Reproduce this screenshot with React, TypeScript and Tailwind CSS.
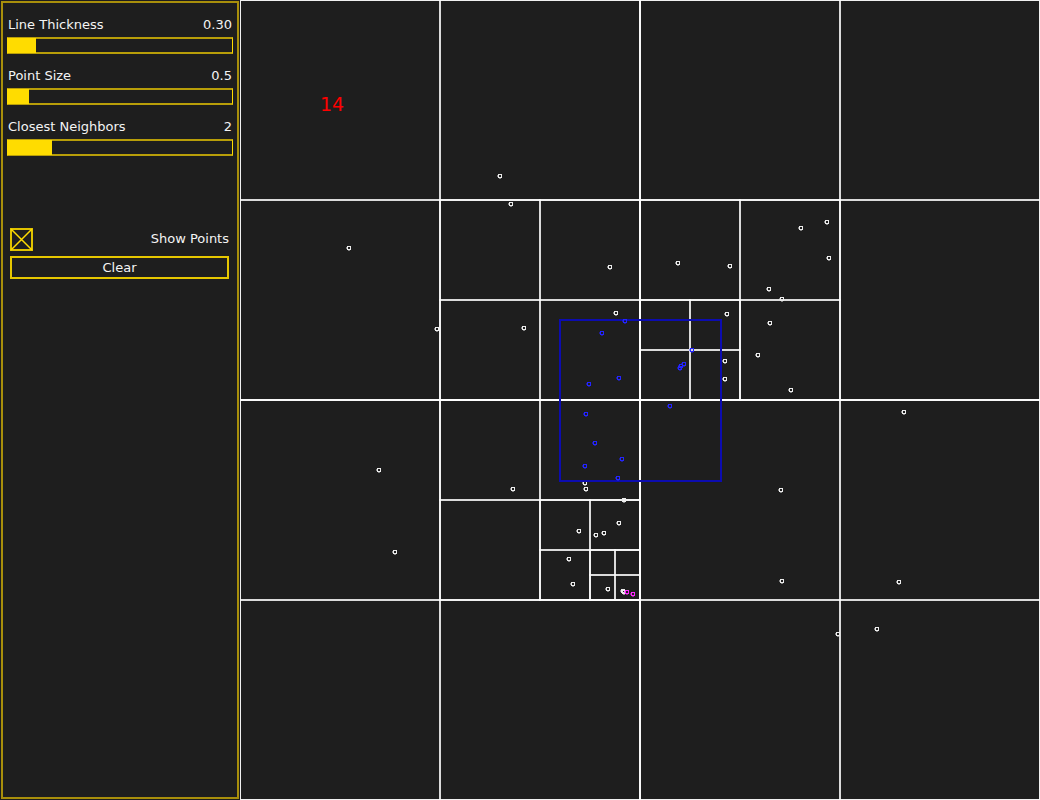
import React, { useState } from "react";

type Cell = { x: number; y: number; size: number };
type Point = [number, number];

const SPLITS = new Set([
  "0,0,800",
  "0,0,400",
  "400,0,400",
  "0,400,400",
  "400,400,400",
  "200,200,200",
  "400,200,200",
  "200,400,200",
  "400,300,100",
  "300,500,100",
  "350,550,50",
]);

function collectCells(x: number, y: number, size: number): Cell[] {
  const own = { x, y, size };
  if (!SPLITS.has(`${x},${y},${size}`)) return [own];
  const half = size / 2;
  return [
    own,
    ...collectCells(x, y, half),
    ...collectCells(x + half, y, half),
    ...collectCells(x, y + half, half),
    ...collectCells(x + half, y + half, half),
  ];
}

const CELLS = collectCells(0, 0, 800);

const POINTS: Point[] = [
  [260, 176], [271, 204], [109, 248], [370, 267], [438, 263], [490, 266],
  [561, 228], [587, 222], [589, 258], [529, 289], [542, 299], [197, 329],
  [284, 328], [376, 313], [487, 314], [530, 323], [518, 355], [485, 361],
  [485, 379], [551, 390], [664, 412], [139, 470], [273, 489], [345, 483],
  [346, 489], [384, 500], [541, 490], [155, 552], [339, 531], [356, 535],
  [364, 533], [379, 523], [329, 559], [333, 584], [368, 589], [383, 591],
  [384, 592], [542, 581], [659, 582], [598, 634], [637, 629],
];

const IN_RANGE: Point[] = [
  [385, 321], [362, 333], [452, 350], [440, 368], [441, 366], [444, 364],
  [379, 378], [349, 384], [430, 406], [346, 414], [355, 443], [382, 459],
  [345, 466], [378, 478],
];

const CLOSEST: Point[] = [[387, 592], [393, 594]];

function Marks({ points, color }: { points: Point[]; color: string }) {
  return (
    <g fill="none" stroke={color} shapeRendering="crispEdges">
      {points.map(([x, y]) => (
        <g key={`${x}-${y}`} transform={`translate(${x} ${y})`}>
          <rect x="-1.5" y="-1.5" width="3" height="3" />
          <path d="M-2.5 -1V1M-1 2.5H1" strokeOpacity="0.5" />
        </g>
      ))}
    </g>
  );
}

type SliderProps = {
  id: string;
  label: string;
  min: number;
  max: number;
  step: number;
  initial: number;
  digits: number;
};

function Slider({ id, label, min, max, step, initial, digits }: SliderProps) {
  const [value, setValue] = useState(initial);
  const fill = ((value - min) / (max - min)) * 100;
  return (
    <div className="flex flex-col gap-1">
      <div className="flex justify-between px-px leading-4">
        <label htmlFor={id}>{label}</label>
        <output htmlFor={id}>{value.toFixed(digits)}</output>
      </div>
      <div className="relative h-[17px] border-x border-y-2 border-x-[#ffdc00] border-y-[#b89e09]">
        <div className="absolute -inset-y-px -left-px bg-[#ffdc00]" style={{ width: `${fill}%` }} />
        <input
          id={id}
          type="range"
          min={min}
          max={max}
          step={step}
          value={value}
          onChange={(e) => setValue(Number(e.target.value))}
          className="absolute inset-0 h-full w-full cursor-pointer opacity-0"
        />
      </div>
    </div>
  );
}

export default function App() {
  const [showPoints, setShowPoints] = useState(true);
  const [cleared, setCleared] = useState(false);
  const visible = showPoints && !cleared;

  return (
    <div className="flex min-h-screen bg-[#1e1e1e] font-['DejaVu_Sans',sans-serif] text-[13px] text-[#f4f4f4]">
      <aside className="w-60 shrink-0 p-px">
        <div className="h-full border-2 border-[#a88f0b] px-1 pt-3.5">
          <div className="flex flex-col gap-3.5">
            <Slider id="thickness" label="Line Thickness" min={0} max={2.3} step={0.01} initial={0.3} digits={2} />
            <Slider id="size" label="Point Size" min={0} max={5} step={0.1} initial={0.5} digits={1} />
            <Slider id="neighbors" label="Closest Neighbors" min={0} max={10} step={1} initial={2} digits={0} />
          </div>
          <div className="mt-[72px] flex flex-col gap-1.5 pr-1 pl-[3px]">
            <div className="flex h-[22px] items-center justify-between">
              <div className="relative size-[23px]">
                <input
                  id="show-points"
                  type="checkbox"
                  checked={showPoints}
                  onChange={(e) => setShowPoints(e.target.checked)}
                  className="peer block size-full cursor-pointer appearance-none border-2 border-[#e0c200]"
                />
                <svg
                  viewBox="0 0 23 23"
                  className="pointer-events-none absolute inset-0 hidden size-full peer-checked:block"
                  stroke="#ffdc00"
                  strokeWidth="1.5"
                >
                  <path d="M1 1L22 22M22 1L1 22" />
                </svg>
              </div>
              <label htmlFor="show-points">Show Points</label>
            </div>
            <button
              type="button"
              onClick={() => setCleared(true)}
              className="h-[23px] cursor-pointer border-2 border-[#e6c700] leading-4"
            >
              Clear
            </button>
          </div>
        </div>
      </aside>
      <main className="min-w-0 flex-1">
        <svg viewBox="0 0 800 800" className="block aspect-square w-full" role="img" aria-label="Quadtree">
          <g fill="none" stroke="#ffffff" strokeOpacity="0.6" strokeWidth="2">
            {CELLS.map(({ x, y, size }) => (
              <rect key={`${x}-${y}-${size}`} x={x} y={y} width={size} height={size} />
            ))}
          </g>
          {visible && (
            <>
              <Marks points={POINTS} color="#ececec" />
              <Marks points={CLOSEST} color="#ff28ff" />
            </>
          )}
          <rect
            x="320"
            y="320"
            width="161"
            height="161"
            fill="none"
            stroke="#0c0cb0"
            strokeWidth="2"
          />
          {visible && <Marks points={IN_RANGE} color="#2424ff" />}
          <text x="80" y="111" fill="#ff0000" fontSize="19">14</text>
        </svg>
      </main>
    </div>
  );
}
